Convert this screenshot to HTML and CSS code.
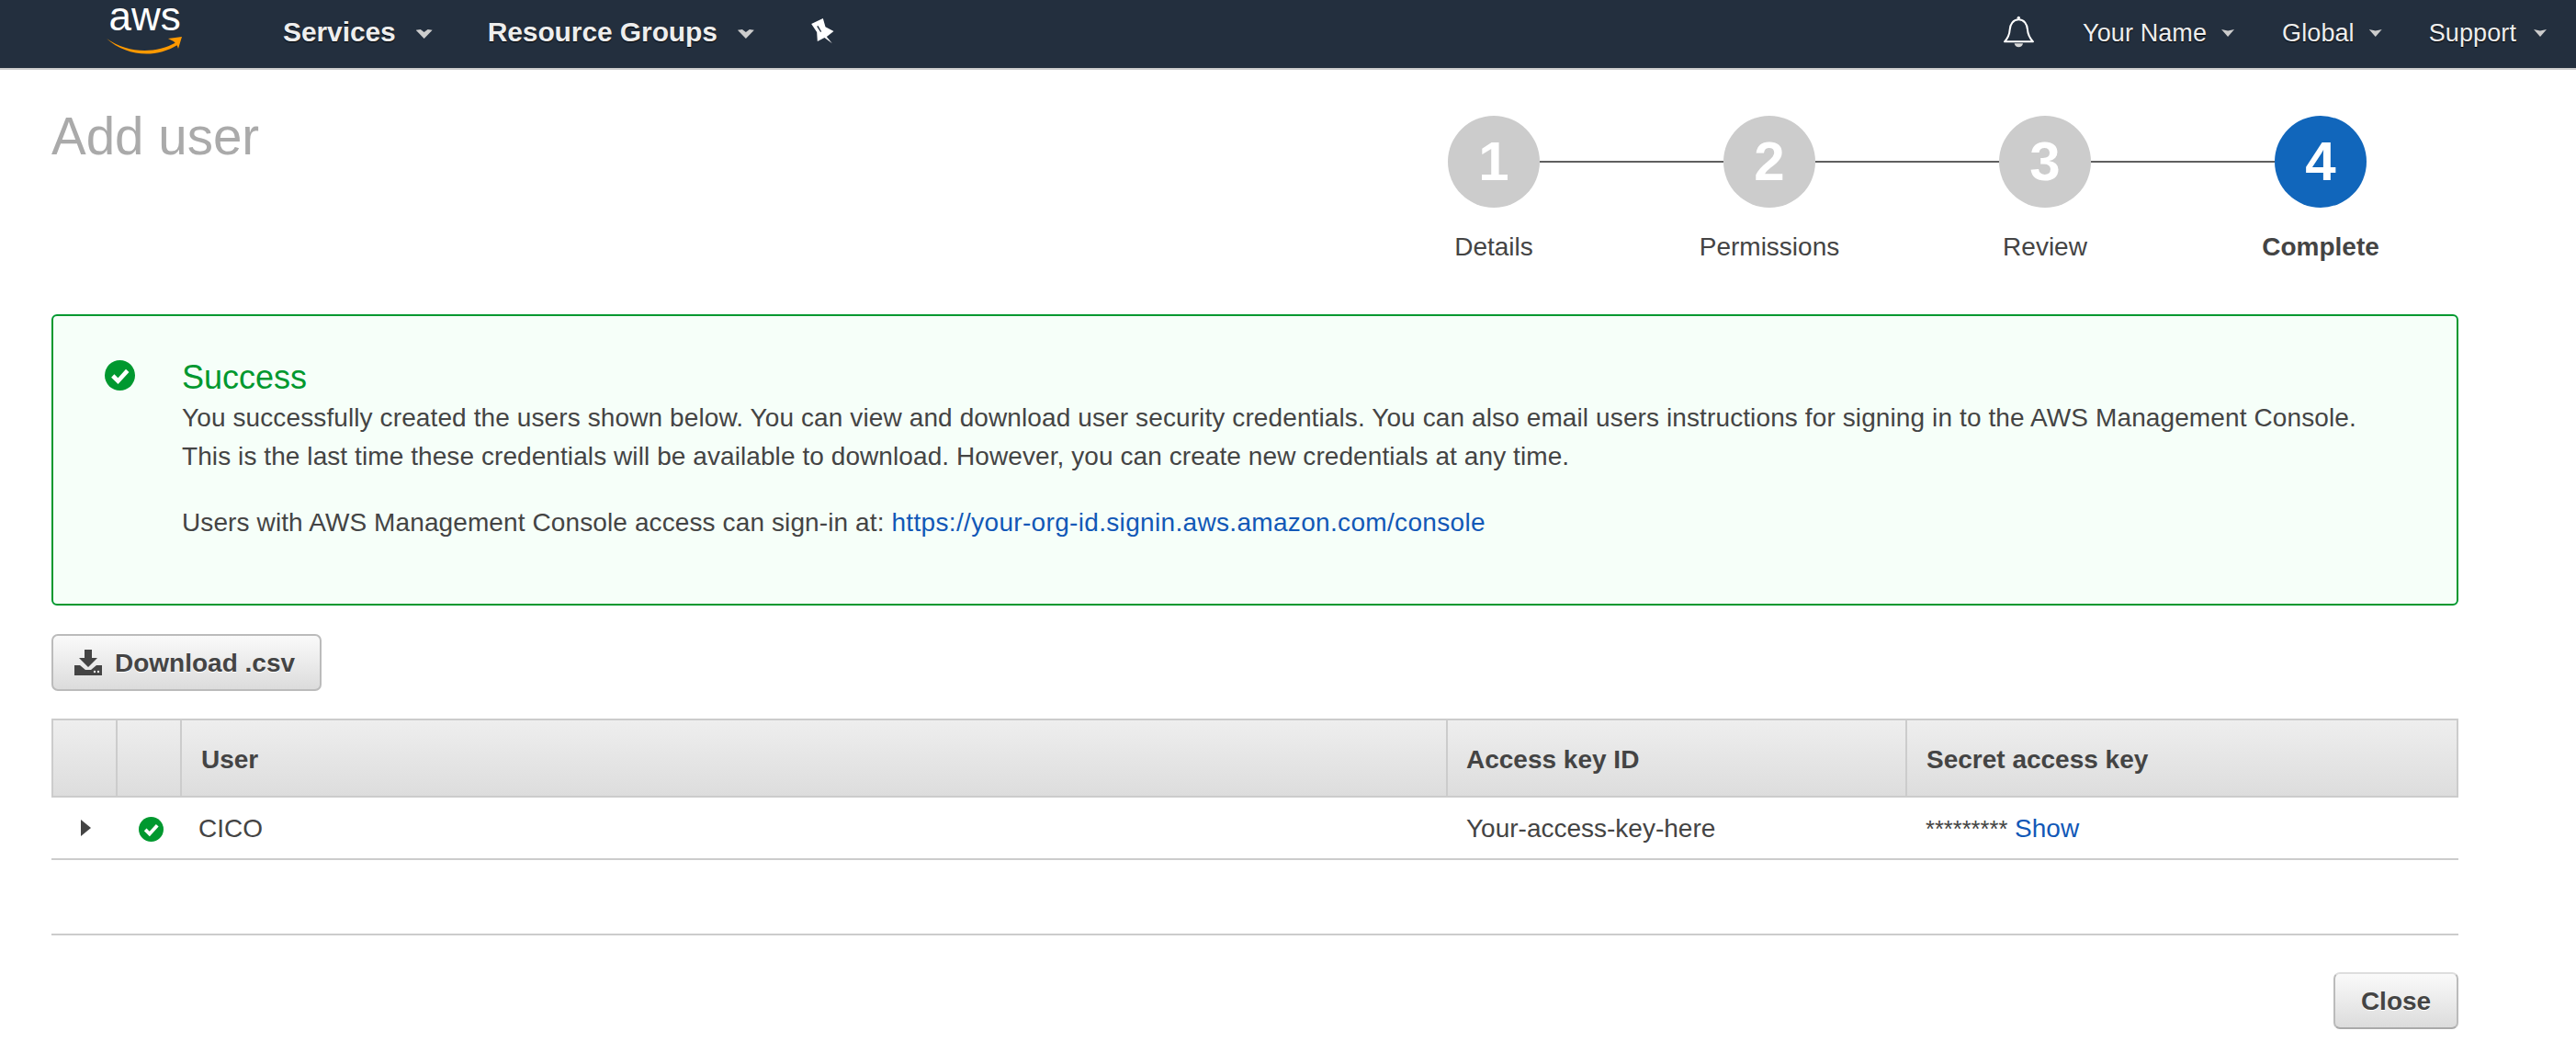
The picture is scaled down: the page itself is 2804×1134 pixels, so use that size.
FILE: index.html
```html
<!DOCTYPE html>
<html lang="en">
<head>
<meta charset="utf-8">
<title>Add user</title>
<link rel="stylesheet" href="styles.css">
</head>
<body>
<nav class="nav">
  <svg class="logo" viewBox="0 -10 84 60" width="84" height="60"><text class="logo-text" x="3.5" y="24">aws</text><path d="M1 33C24 49 54 50 77 37L78 40C54 55 22 52 1 33Z" fill="#f90"/><path d="M68 33 83 31 79 44C78 40 76 38 74 36 72 35 70 34 68 33Z" fill="#f90"/></svg>
  <a class="nav-main nav-services">Services<i class="caret"></i></a>
  <a class="nav-main nav-groups">Resource Groups<i class="caret"></i></a>
  <svg class="pin" viewBox="42 30 74 84" width="25" height="28"><path fill-rule="evenodd" d="M42 48 80 30 88 58 115 72 92 90 110 112 85 93 62 105 60 75ZM60 56 72 75 75 73 64 54Z" fill="#fff"/></svg>
  <svg class="bell" viewBox="30 20 105 108" width="35" height="36"><path d="M82 33C64 33 54 48 53 66 52 84 46 94 36 105H129C119 94 112 84 111 66 110 48 100 33 82 33Z" fill="none" stroke="#fff" stroke-width="6" stroke-linejoin="round"/><circle cx="82" cy="27" r="5" fill="#fff"/><path d="M68 111C70 127 94 127 96 111Z" fill="#d8d8d8"/></svg>
  <a class="nav-sub nav-name">Your Name<i class="caret small"></i></a>
  <a class="nav-sub nav-global">Global<i class="caret small"></i></a>
  <a class="nav-sub nav-support">Support<i class="caret small"></i></a>
</nav>
<main class="page">
  <header class="head">
    <h1 class="title">Add user</h1>
    <div class="steps">
      <div class="track">
        <span class="dot">1</span><span class="line"></span>
        <span class="dot">2</span><span class="line"></span>
        <span class="dot">3</span><span class="line"></span>
        <span class="dot active">4</span>
      </div>
      <div class="labels">
        <span>Details</span><span>Permissions</span><span>Review</span><strong>Complete</strong>
      </div>
    </div>
  </header>
  <section class="alert">
    <svg class="check big" viewBox="0 0 32 32"><circle cx="16" cy="16" r="16" fill="#00982f"/><path d="M8.5 16.5 14 22 24 11" fill="none" stroke="#fff" stroke-width="4.5"/></svg>
    <div class="alert-body">
      <h2 class="alert-title">Success</h2>
      <p class="alert-text">You successfully created the users shown below. You can view and download user security credentials. You can also email users instructions for signing in to the AWS Management Console.<br><span class="tight">This is the last time these credentials will be available to download. However, you can create new credentials at any time.</span></p>
      <p class="alert-text spaced">Users with AWS Management Console access can sign-in at: <a class="link">https://your-org-id.signin.aws.amazon.com/console</a></p>
    </div>
  </section>
  <button class="btn download">
    <svg class="dl-icon" viewBox="0 0 30 28" width="30" height="28"><path d="M11 0H19V9H25L15 19 5 9H11Z" fill="#444"/><path d="M0 17H6L12 22H18L24 17H30V28H0Z" fill="#444"/><circle cx="22" cy="24" r="1.2" fill="#eee"/><circle cx="26" cy="24" r="1.2" fill="#eee"/></svg>
    Download .csv
  </button>
  <table class="grid">
    <colgroup><col class="c1"><col class="c2"><col class="c3"><col class="c4"><col class="c5"></colgroup>
    <thead><tr><th></th><th></th><th>User</th><th>Access key ID</th><th>Secret access key</th></tr></thead>
    <tbody><tr>
      <td class="center"><i class="arrow"></i></td>
      <td class="center icon-cell"><svg class="check small" viewBox="0 0 32 32"><circle cx="16" cy="16" r="16" fill="#00982f"/><path d="M8.5 16.5 14 22 24 11" fill="none" stroke="#fff" stroke-width="4.5"/></svg></td>
      <td>CICO</td>
      <td>Your-access-key-here</td>
      <td><span class="mask">*********</span> <a class="link">Show</a></td>
    </tr></tbody>
  </table>
  <hr class="rule">
  <div class="actions"><button class="btn close">Close</button></div>
</main>
</body>
</html>
```
FILE: styles.css
```css
* { box-sizing: border-box; }
html, body { margin: 0; padding: 0; }
body { font-family: "Liberation Sans", Arial, sans-serif; font-size: 28px; line-height: 34px; color: #444; background: #fff; overflow: hidden; }

.nav { display: flex; align-items: center; height: 76px; padding-left: 115px; background: #232f3e; border-bottom: 2px solid #ccc; color: #eee; text-shadow: 0 1px 1px #000; }
.logo { flex: none; margin-top: -16px; overflow: visible; }
.logo-text { font-size: 44px; fill: #fff; text-shadow: none; }
.nav-main { display: flex; align-items: center; padding-bottom: 4px; font-size: 30px; font-weight: 700; letter-spacing: -.1px; }
.nav-services { margin-left: 109px; }
.nav-groups { margin-left: 60px; }
.caret { display: block; width: 18px; height: 10px; margin-left: 22px; margin-top: 4px; background: #ccc; clip-path: polygon(0 8%, 28% 0, 50% 30%, 72% 0, 100% 8%, 50% 100%); }
.caret.small { width: 14px; height: 8px; margin-left: 16px; margin-top: 0; clip-path: polygon(0 0, 50% 18%, 100% 0, 50% 100%); }
.pin { flex: none; margin-left: 62px; margin-top: -6px; }
.bell { flex: none; margin-left: auto; margin-top: -4px; }
.nav-sub { display: flex; align-items: center; padding-bottom: 2px; font-size: 27px; letter-spacing: .1px; }
.nav-name { margin-left: 52px; }
.nav-global { margin-left: 52px; }
.nav-support { margin-left: 51px; margin-right: 32px; }
.nav-support .caret.small { margin-left: 19px; }

.page { padding: 0 128px 0 56px; }
.head { display: flex; justify-content: space-between; align-items: flex-start; }
.title { margin: 40px 0 0; font-size: 56.5px; line-height: 66px; font-weight: 400; color: #aaa; }
.steps { width: 1200px; margin-top: 50px; }
.track { display: flex; align-items: center; padding: 0 100px; }
.dot { flex: none; width: 100px; height: 100px; border-radius: 50%; background: #ccc; color: #fff; font-size: 60px; font-weight: 700; line-height: 100px; text-align: center; }
.dot.active { background: #1166bb; }
.line { flex: 1; height: 2px; background: #5f5f5f; }
.labels { display: grid; grid-template-columns: repeat(4, 300px); margin-top: 26px; text-align: center; }

.alert { display: flex; height: 317px; margin-top: 56px; padding: 44px 0 0 56px; background: #f6fff9; border: 2px solid #00982f; border-radius: 6px; }
.check { display: block; flex: none; }
.check.big { width: 33px; height: 33px; margin-top: 4px; margin-right: 51px; }
.check.small { width: 27px; height: 27px; margin: 3px auto 0; }
.alert-title { margin: 0; font-size: 36px; line-height: 46px; font-weight: 400; color: #00982f; }
.alert-text { margin: 0; line-height: 42px; letter-spacing: .11px; }
.alert-text.spaced { margin-top: 30px; }
.tight { letter-spacing: .08px; }
.link { color: #1158b7; }
.alert-text .link { letter-spacing: .33px; }

.btn { display: flex; align-items: center; height: 62px; padding: 2px 0 0; font: 700 28px/34px "Liberation Sans", Arial, sans-serif; color: #444; background: linear-gradient(#fafafa, #dcdcdc); border: 2px solid #bbb; border-radius: 7px; text-shadow: 0 1px 0 #fff; }
.download { width: 294px; margin-top: 31px; padding-left: 23px; }
.dl-icon { margin-right: 14px; margin-top: -2px; }
.close { width: 136px; justify-content: center; border-top-color: #ddd; border-bottom-color: #aaa; }

.grid { width: 2620px; margin-top: 30px; border-collapse: separate; border-spacing: 0; table-layout: fixed; }
.c1 { width: 70px; } .c2 { width: 70px; } .c3 { width: 1378px; } .c4 { width: 500px; } .c5 { width: 602px; }
.grid th { height: 86px; padding: 4px 0 0 20px; text-align: left; font-weight: 700; background: linear-gradient(#eee, #ddd); border-top: 2px solid #ccc; border-bottom: 2px solid #ccc; border-left: 2px solid #ccc; }
.grid th:nth-child(3) { padding-left: 21px; }
.grid th:last-child { padding-left: 21px; border-right: 2px solid #ccc; }
.grid td { height: 68px; padding: 2px 0 0 22px; border-bottom: 2px solid #ccc; }
.grid td:nth-child(3) { padding-left: 20px; }
.grid td:last-child { padding-left: 22px; }
.grid td.center { padding: 0; }
.grid td.icon-cell { padding-left: 6px; }
.arrow { display: block; width: 0; height: 0; margin-left: 32px; border-top: 9px solid transparent; border-bottom: 9px solid transparent; border-left: 11px solid #444; }
.mask { font-size: 25.5px; }

.rule { height: 2px; margin: 80px 0 0; border: 0; background: #ccc; }
.actions { display: flex; justify-content: flex-end; margin-top: 40px; }
```
